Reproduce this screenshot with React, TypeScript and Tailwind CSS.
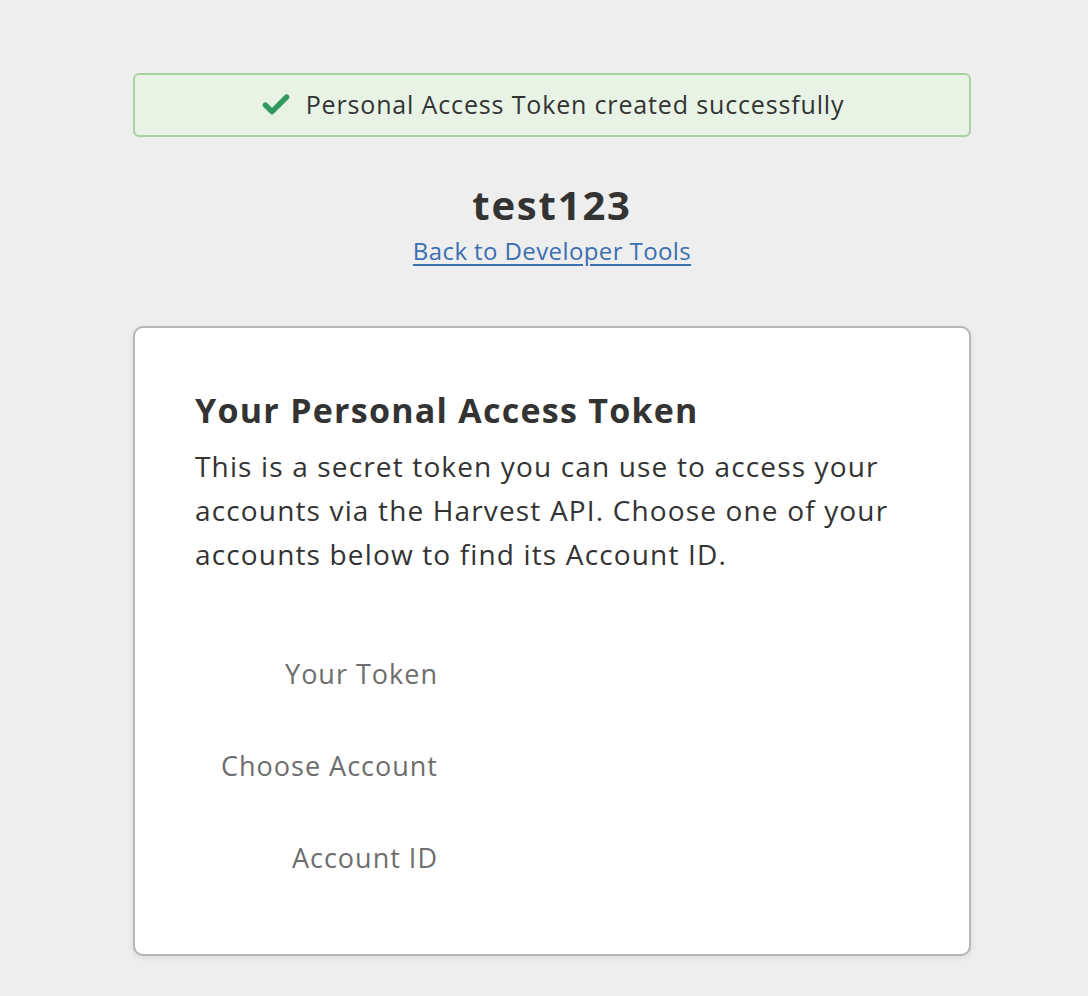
import { Check } from 'lucide-react';

const fields = ['Your Token', 'Choose Account', 'Account ID'];

export default function App() {
  return (
    <div
      className="min-h-[996px] bg-[#eeeeee] text-[#333333]"
      style={{ fontFamily: '"Open Sans", Lato, sans-serif' }}
    >
      <div className="ml-[133px] w-[838px] pt-[73px]">
        {/* Flash */}
        <div className="flex h-[64px] items-center justify-center gap-[14px] rounded-[6px] border-2 border-[#a6d3a0] bg-[#e8f3e6]">
          <Check className="h-[32px] w-[32px] text-[#2f9a5c]" strokeWidth={4} />
          <span className="text-[25px] tracking-[0.85px]">Personal Access Token created successfully</span>
        </div>

        {/* Title */}
        <div className="mt-[44px] flex flex-col items-center">
          <h1 className="text-[40px] font-bold leading-[48px] tracking-[1.8px]">test123</h1>
          <a href="#" className="mt-[7px] text-[24px] leading-[30px] tracking-[0.4px] text-[#3b6fb1] underline underline-offset-4">
            Back to Developer Tools
          </a>
        </div>

        {/* Card */}
        <div className="mt-[60px] h-[630px] rounded-[10px] border-2 border-[#b5b5b5] bg-white px-[60px] pt-[58px] shadow-[0_2px_6px_rgba(0,0,0,0.08)]">
          <h2 className="text-[34px] font-bold leading-[48px] tracking-[1.25px]">Your Personal Access Token</h2>
          <p className="mt-[10px] text-[28px] leading-[44px] tracking-[1.15px]">
            This is a secret token you can use to access your accounts via the Harvest API. Choose one of your accounts below to find its Account ID.
          </p>

          <div className="mt-[81px] flex flex-col gap-[58px]">
            {fields.map((f) => (
              <div key={f} className="flex items-center">
                <label className="w-[243px] text-right text-[27px] leading-[34px] tracking-[1px] text-[#6e6e6e]">{f}</label>
              </div>
            ))}
          </div>
        </div>
      </div>
    </div>
  );
}
